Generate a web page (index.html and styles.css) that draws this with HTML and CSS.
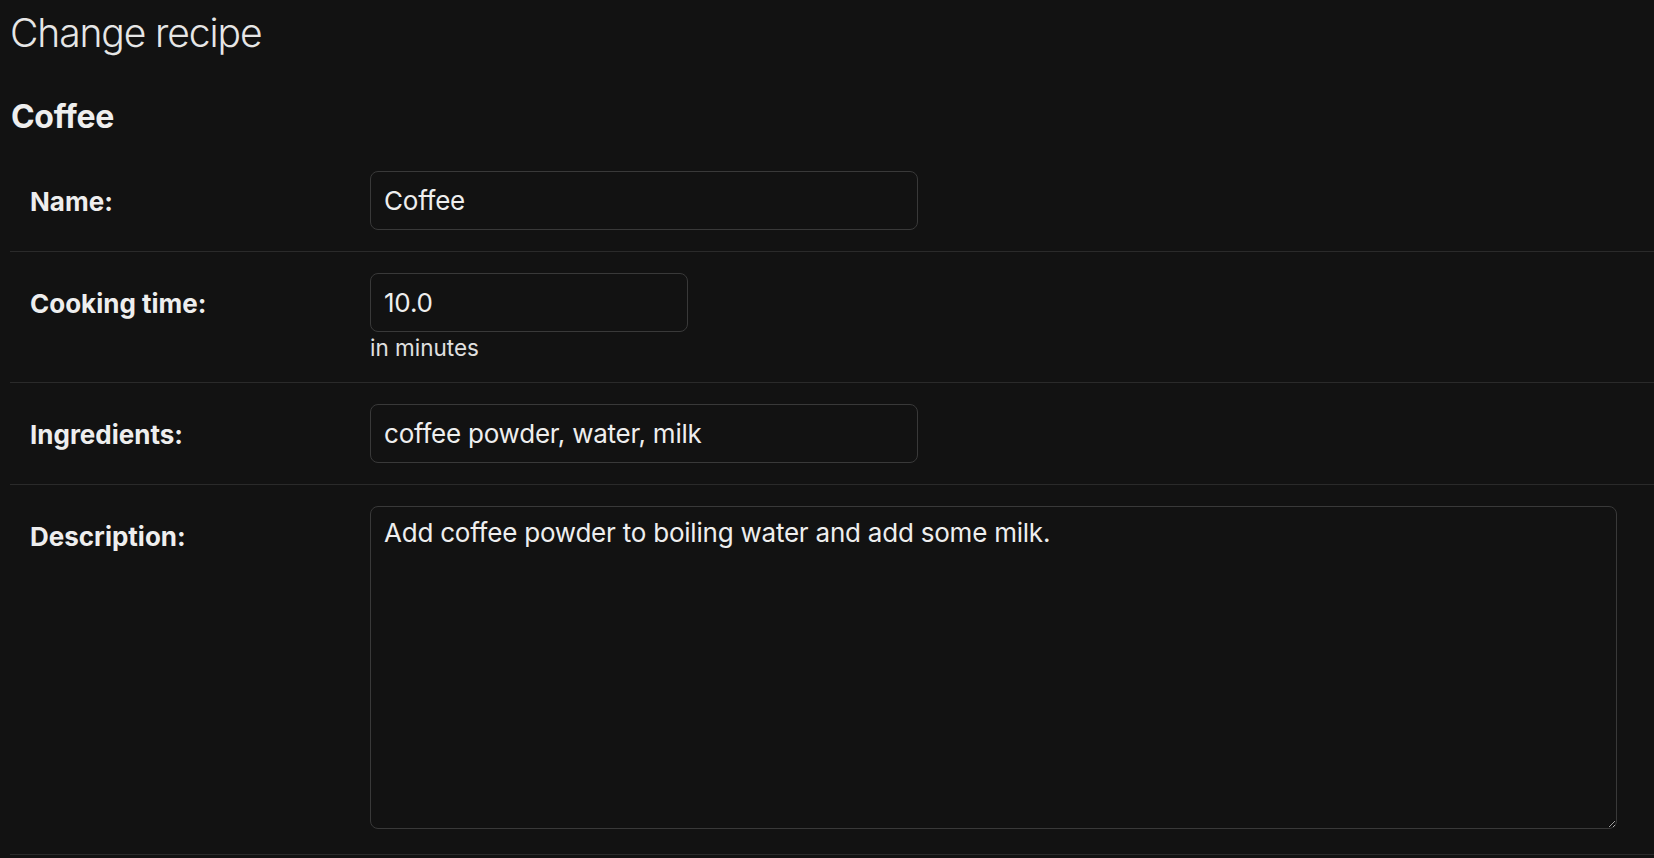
FILE: index.html
```html
<!DOCTYPE html>
<html lang="en">
<head>
<meta charset="utf-8">
<title>Change recipe</title>
<link rel="stylesheet" href="styles.css">
</head>
<body>
<main class="content">
  <h1 class="page-title">Change recipe</h1>
  <h2 class="subtitle">Coffee</h2>
  <form class="change-form">
    <div class="form-row">
      <label class="field-label" for="id_name">Name:</label>
      <div class="field-box">
        <input class="text-input wide" id="id_name" type="text" value="Coffee">
      </div>
    </div>
    <div class="form-row">
      <label class="field-label" for="id_time">Cooking time:</label>
      <div class="field-box">
        <input class="text-input narrow" id="id_time" type="text" value="10.0">
        <div class="help">in minutes</div>
      </div>
    </div>
    <div class="form-row">
      <label class="field-label" for="id_ing">Ingredients:</label>
      <div class="field-box">
        <input class="text-input wide" id="id_ing" type="text" value="coffee powder, water, milk">
      </div>
    </div>
    <div class="form-row">
      <label class="field-label" for="id_desc">Description:</label>
      <div class="field-box">
        <textarea class="text-area" id="id_desc">Add coffee powder to boiling water and add some milk.</textarea>
      </div>
    </div>
  </form>
</main>
</body>
</html>
```
FILE: styles.css
```css
html, body {
  margin: 0;
  padding: 0;
  background: #121212;
  color-scheme: dark;
}
body {
  font-family: Inter, "Noto Sans", "DejaVu Sans", sans-serif;
  color: #eeeeee;
  overflow: hidden;
}
.content {
  padding: 9px 0 0 10px;
}
.page-title {
  margin: 0;
  font-size: 39px;
  font-weight: 300;
  letter-spacing: -1.1px;
  line-height: normal;
  color: #e6e6e6;
}
.subtitle {
  margin: 41px 0 14px 1px;
  font-size: 32px;
  font-weight: 700;
  letter-spacing: -0.3px;
  line-height: normal;
  color: #eeeeee;
}
.change-form {
  margin: 0;
}
.form-row {
  display: flex;
  align-items: flex-start;
  padding: 21px 0 21px 20px;
  border-bottom: 1px solid #2a2a2a;
}
.field-label {
  flex: 0 0 340px;
  padding-top: 15px;
  font-size: 26px;
  font-weight: 700;
  line-height: normal;
  color: #eeeeee;
}
.field-box {
  display: flex;
  flex-direction: column;
}
.text-input,
.text-area {
  box-sizing: border-box;
  background: #121212;
  color: #eeeeee;
  border: 1.5px solid #393939;
  border-radius: 8px;
  font-family: Inter, "Noto Sans", "DejaVu Sans", sans-serif;
  font-size: 26px;
  letter-spacing: -0.22px;
  outline: none;
  margin: 0;
}
.text-input {
  height: 59px;
  padding: 0 13px;
}
.wide { width: 548px; }
.narrow { width: 318px; }
.help {
  margin-top: 2px;
  font-size: 22.5px;
  line-height: normal;
  color: #e0e0e0;
}
.text-area {
  display: block;
  width: 1247px;
  height: 323px;
  padding: 10px 13px;
  line-height: normal;
  resize: both;
  margin-bottom: 4px;
}
```
